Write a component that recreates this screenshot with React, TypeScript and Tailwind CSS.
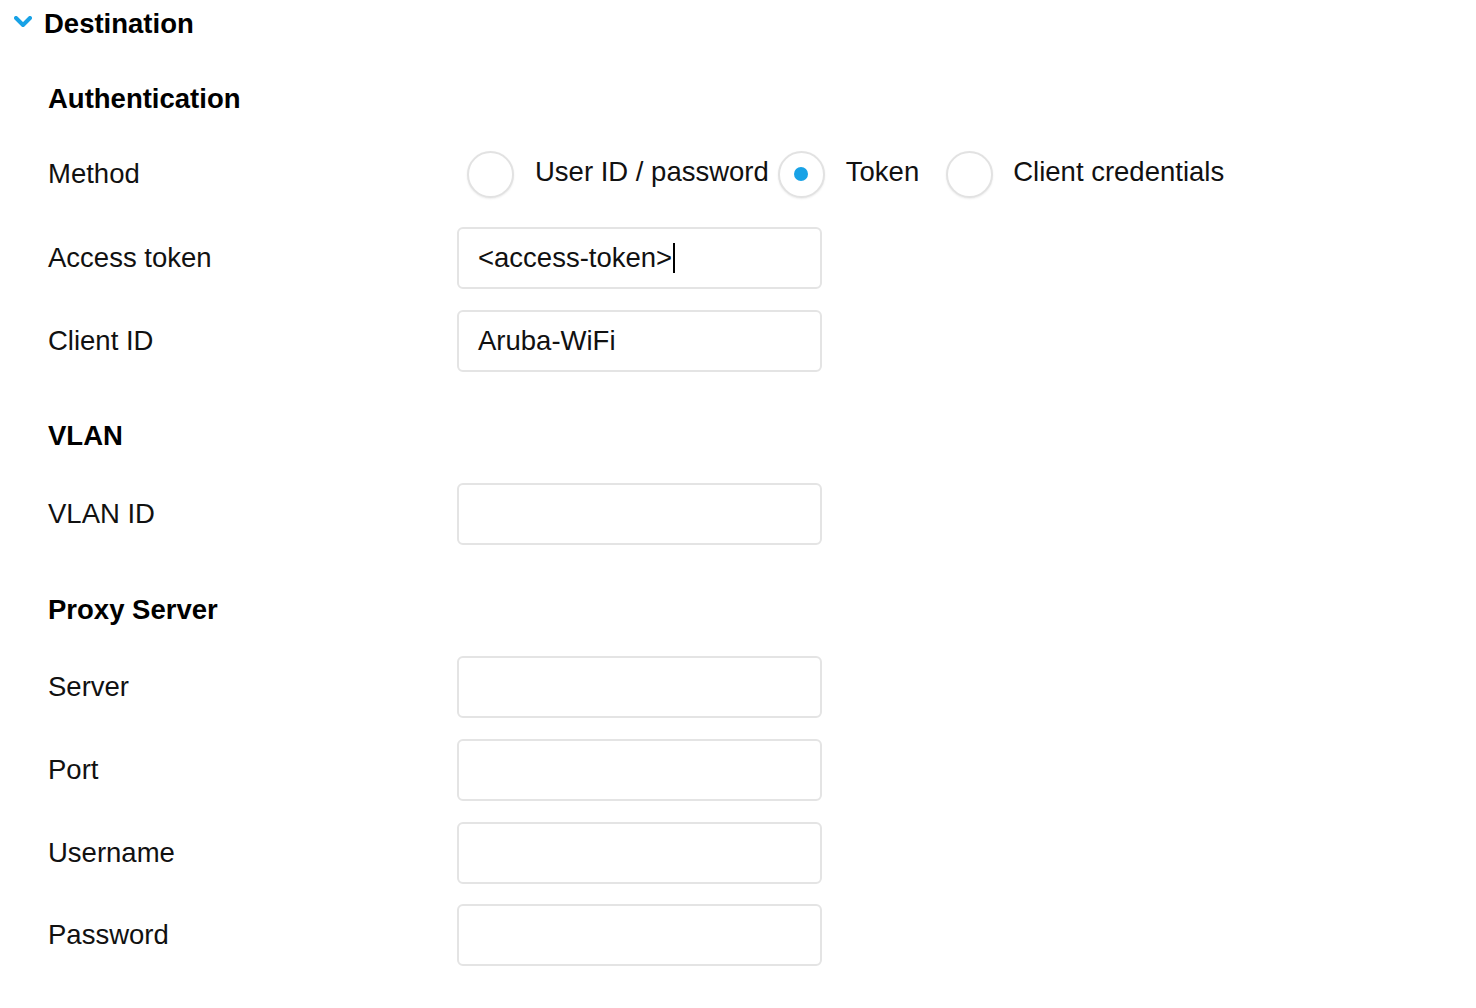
import React from 'react';

const font = { fontFamily: '"Liberation Sans", Arial, sans-serif' };

const Field = ({ value, caret }: { value?: string; caret?: boolean }) => (
  <div className="w-[365px] h-[62px] rounded-[6px] border-2 border-[#e4e4e4] bg-white flex items-center pl-[19px] text-[27.5px] text-[#111]">
    {value && <span>{value}</span>}
    {caret && <span className="ml-[1px] w-[2px] h-[30px] bg-black" />}
  </div>
);

const Row = ({ label, children, className = '' }: { label: string; children: React.ReactNode; className?: string }) => (
  <div className={`flex items-center ${className}`}>
    <div className="w-[409px] text-[27.5px] text-[#111]">{label}</div>
    {children}
  </div>
);

const Radio = ({ checked }: { checked?: boolean }) => (
  <span className="w-[47px] h-[47px] rounded-full border-2 border-[#e2e2e2] bg-white shadow-[0_1px_2px_rgba(0,0,0,0.08)] flex items-center justify-center shrink-0">
    {checked && <span className="w-[14px] h-[14px] rounded-full bg-[#18a2e6]" />}
  </span>
);

const Heading = ({ children, className = '' }: { children: React.ReactNode; className?: string }) => (
  <div className={`h-[36px] flex items-center text-[27.5px] font-bold text-black ${className}`}>{children}</div>
);

export default function App() {
  return (
    <div className="min-h-screen w-full bg-white" style={font}>
      {/* Header */}
      <div className="h-[48px] flex items-center pl-[14px]">
        <svg width="18" height="12" viewBox="0 0 18 12" className="mt-[-4px]">
          <polyline points="2,2 9,9 16,2" fill="none" stroke="#18a2e6" strokeWidth="4" strokeLinecap="round" strokeLinejoin="round" />
        </svg>
        <span className="ml-[12px] text-[27.5px] font-bold text-black">Destination</span>
      </div>

      <div className="pl-[48px] flex flex-col">
        <Heading className="mt-[33px]">Authentication</Heading>

        <Row label="Method" className="mt-[33px] h-[48px]">
          <div className="flex items-center ml-[10px] text-[27.5px] text-[#111]">
            <Radio />
            <span className="ml-[21px] mr-[9px] -mt-[4px]">User ID / password</span>
            <Radio checked />
            <span className="ml-[21px] mr-[27px] -mt-[4px]">Token</span>
            <Radio />
            <span className="ml-[20px] -mt-[4px]">Client credentials</span>
          </div>
        </Row>

        <Row label="Access token" className="mt-[29px]">
          <Field value="<access-token>" caret />
        </Row>
        <Row label="Client ID" className="mt-[21px]">
          <Field value="Aruba-WiFi" />
        </Row>

        <Heading className="mt-[46px]">VLAN</Heading>
        <Row label="VLAN ID" className="mt-[29px]">
          <Field />
        </Row>

        <Heading className="mt-[47px]">Proxy Server</Heading>
        <Row label="Server" className="mt-[28px]">
          <Field />
        </Row>
        <Row label="Port" className="mt-[21px]">
          <Field />
        </Row>
        <Row label="Username" className="mt-[21px]">
          <Field />
        </Row>
        <Row label="Password" className="mt-[20px]">
          <Field />
        </Row>
      </div>
    </div>
  );
}
